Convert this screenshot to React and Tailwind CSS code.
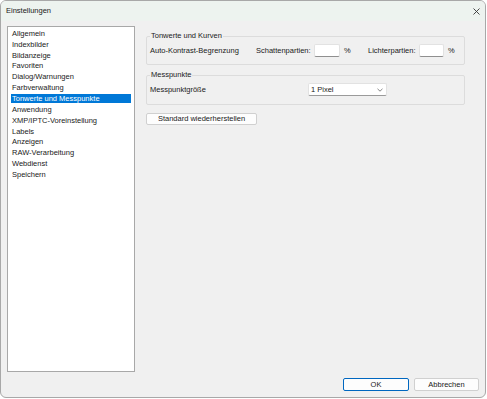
import React from "react";

const items = [
  "Allgemein",
  "Indexbilder",
  "Bildanzeige",
  "Favoriten",
  "Dialog/Warnungen",
  "Farbverwaltung",
  "Tonwerte und Messpunkte",
  "Anwendung",
  "XMP/IPTC-Voreinstellung",
  "Labels",
  "Anzeigen",
  "RAW-Verarbeitung",
  "Webdienst",
  "Speichern",
];

function Input({ w }) {
  return (
    <div
      className={`h-[13px] bg-white border border-[#e2e2e2] border-b-[#8f8f8f] rounded-[2px] ${w}`}
    />
  );
}

export default function App() {
  return (
    <div
      className="w-[487px] h-[399px] bg-white text-[7.5px] text-[#1a1a1a]"
      style={{ fontFamily: '"Liberation Sans", Arial, sans-serif' }}
    >
      <div className="w-[486px] h-[398px] border border-[#a8a8a8] rounded-[6px] overflow-hidden flex flex-col bg-[#f0f0f0]">
        {/* Title bar */}
        <div className="h-[20px] shrink-0 bg-[#edf3ef] flex items-center justify-between pl-[5px] pr-[4px]">
          <span className="leading-[10px]">Einstellungen</span>
          <svg width="7" height="7" viewBox="0 0 7 7" className="mr-[1px]">
            <path d="M0.5 0.5 L6.5 6.5 M6.5 0.5 L0.5 6.5" stroke="#333" strokeWidth="0.9" fill="none" />
          </svg>
        </div>

        {/* Body */}
        <div className="flex-1 flex flex-col">
          <div className="flex pt-[5px] pl-[6px]">
            {/* List */}
            <div className="w-[128px] h-[346px] bg-white border border-[#a8a8a8] pt-[1px]">
              {items.map((t) => {
                const sel = t === "Tonwerte und Messpunkte";
                return (
                  <div key={t} className="h-[10.85px] flex items-center mx-[3px]">
                    <div
                      className={`h-[9px] w-full flex items-center px-[1px] leading-[9px] ${
                        sel ? "bg-[#0078d7] text-white" : ""
                      }`}
                    >
                      {t}
                    </div>
                  </div>
                );
              })}
            </div>

            {/* Right column */}
            <div className="ml-[11px] pt-[5px] flex flex-col items-start">
              <fieldset className="w-[319px] border border-[#dcdcdc] rounded-[2px] px-[3px] pt-[3px] pb-[7px] m-0">
                <legend className="px-[1px] leading-[10px] ml-0">Tonwerte und Kurven</legend>
                <div className="flex items-center h-[13px]">
                  <span className="w-[106px]">Auto-Kontrast-Begrenzung</span>
                  <span className="w-[58px]">Schattenpartien:</span>
                  <Input w="w-[26px]" />
                  <span className="ml-[4px] w-[24px]">%</span>
                  <span className="w-[51px]">Lichterpartien:</span>
                  <Input w="w-[25px]" />
                  <span className="ml-[4px]">%</span>
                </div>
              </fieldset>

              <fieldset className="mt-[5px] w-[319px] border border-[#dcdcdc] rounded-[2px] px-[3px] pt-[3px] pb-[8px] m-0">
                <legend className="px-[1px] leading-[10px]">Messpunkte</legend>
                <div className="flex items-center h-[13px]">
                  <span className="w-[158px]">Messpunktgröße</span>
                  <div className="w-[79px] h-[13px] bg-white border border-[#e2e2e2] border-b-[#9a9a9a] rounded-[2px] flex items-center justify-between pl-[2px] pr-[3px]">
                    <span>1 Pixel</span>
                    <svg width="6" height="4" viewBox="0 0 6 4">
                      <path d="M0.5 0.8 L3 3.2 L5.5 0.8" stroke="#555" strokeWidth="0.7" fill="none" />
                    </svg>
                  </div>
                </div>
              </fieldset>

              <button className="mt-[8px] w-[111px] h-[12px] bg-[#fdfdfd] border border-[#d0d0d0] rounded-[2px] flex items-center justify-center leading-[10px]">
                Standard wiederherstellen
              </button>
            </div>
          </div>

          {/* Footer */}
          <div className="mt-auto flex justify-end gap-[5px] pr-[6px] pb-[6px]">
            <button className="w-[66px] h-[13px] bg-[#fdfdfd] border border-[#0067c0] rounded-[2px] flex items-center justify-center leading-[10px]">
              OK
            </button>
            <button className="w-[65px] h-[13px] bg-[#fdfdfd] border border-[#d0d0d0] rounded-[2px] flex items-center justify-center leading-[10px]">
              Abbrechen
            </button>
          </div>
        </div>
      </div>
    </div>
  );
}
